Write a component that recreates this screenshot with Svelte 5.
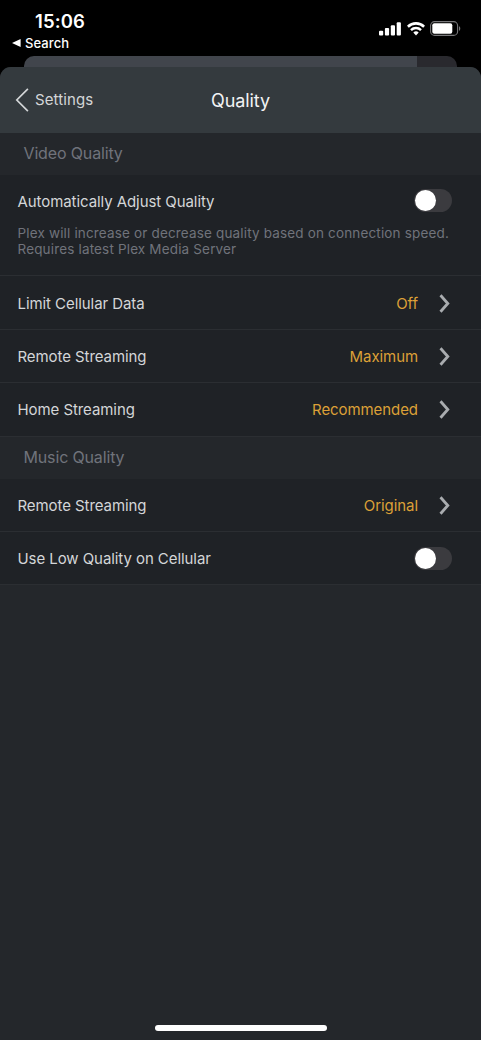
<script lang="ts">
	type Row = {
		label: string;
		kind: 'link' | 'toggle';
		value?: string;
		hint?: string[];
	};
	type Section = { title: string; rows: Row[] };

	let sections = $state<Section[]>([
		{
			title: 'Video Quality',
			rows: [
				{
					label: 'Automatically Adjust Quality',
					kind: 'toggle',
					hint: [
						'Plex will increase or decrease quality based on connection speed.',
						'Requires latest Plex Media Server'
					]
				},
				{ label: 'Limit Cellular Data', kind: 'link', value: 'Off' },
				{ label: 'Remote Streaming', kind: 'link', value: 'Maximum' },
				{ label: 'Home Streaming', kind: 'link', value: 'Recommended' }
			]
		},
		{
			title: 'Music Quality',
			rows: [
				{ label: 'Remote Streaming', kind: 'link', value: 'Original' },
				{ label: 'Use Low Quality on Cellular', kind: 'toggle' }
			]
		}
	]);

	let enabled = $state<Record<string, boolean>>({});
</script>

{#snippet toggle(label: string)}
	<button
		class="switch"
		class:on={enabled[label]}
		role="switch"
		aria-checked={!!enabled[label]}
		aria-label={label}
		onclick={() => (enabled[label] = !enabled[label])}
	>
		<span class="knob"></span>
	</button>
{/snippet}

<div class="screen">
	<div class="status">
		<div class="status-left">
			<div class="time">15:06</div>
			<div class="return">
				<svg width="9" height="8" viewBox="0 0 9 8"><path d="M8.6 0v8L0 4z" fill="#fff" /></svg>
				<span>Search</span>
			</div>
		</div>
		<div class="status-right">
			<svg width="22" height="14" viewBox="0 0 22 14" fill="#fff">
				<rect x="0" y="8.7" width="4.2" height="4.8" rx="1" />
				<rect x="5.9" y="6" width="4.2" height="7.5" rx="1" />
				<rect x="11.8" y="3.2" width="4.2" height="10.3" rx="1" />
				<rect x="17.7" y="0.2" width="4.2" height="13.3" rx="1" />
			</svg>
			<svg class="wifi" width="18" height="14" viewBox="0 0 18 14" fill="none" stroke="#fff">
				<path d="M0.9 4.7a11.6 11.6 0 0 1 16.2 0" stroke-width="2.6" />
				<path d="M4 8.1a7.1 7.1 0 0 1 10 0" stroke-width="2.4" />
				<path d="M6.3 10.6a3.9 3.9 0 0 1 5.4 0L9 13.4z" fill="#fff" stroke="none" />
			</svg>
			<svg class="battery" width="31" height="15" viewBox="0 0 31 15">
				<rect x="0.6" y="0.6" width="27" height="13.8" rx="4" fill="none" stroke="#77777a" stroke-width="1.1" />
				<rect x="2.3" y="2.3" width="20" height="10.4" rx="2" fill="#fff" />
				<path d="M29 5.2v4.6c1.7-.7 1.7-3.9 0-4.6z" fill="#77777a" />
			</svg>
		</div>
	</div>

	<div class="behind"></div>

	<div class="sheet">
		<header>
			<button class="back">
				<svg width="14" height="24" viewBox="0 0 14 24" fill="none" stroke="#d3d6d8" stroke-width="1.7">
					<path d="M12.9 0.8L1.8 12l11.1 11.2" />
				</svg>
				<span>Settings</span>
			</button>
			<h1>Quality</h1>
		</header>

		{#each sections as section}
			<h2>{section.title}</h2>
			{#each section.rows as row}
				<div class="row">
					<div class="line">
						<span class="label">{row.label}</span>
						{#if row.kind === 'toggle'}
							{@render toggle(row.label)}
						{:else}
							<span class="value">{row.value}</span>
							<svg class="chevron" width="11" height="19" viewBox="0 0 11 19" fill="none" stroke="#a9acaf" stroke-width="2.8">
								<path d="M1.5 1.3L8.8 9.5l-7.3 8.2" />
							</svg>
						{/if}
					</div>
					{#if row.hint}
						<p>
							{#each row.hint as text}
								<span>{text}</span>
							{/each}
						</p>
					{/if}
				</div>
			{/each}
		{/each}

		<div class="home"></div>
	</div>
</div>

<style>
	:global(body) {
		background: #000;
	}

	.screen {
		display: flex;
		flex-direction: column;
		width: 481px;
		height: 1040px;
		background: #000;
		color: #d4d6d8;
		font-family: Inter, 'Liberation Sans', sans-serif;
		overflow: hidden;
	}

	button {
		border: none;
		padding: 0;
		background: none;
		color: inherit;
		font: inherit;
	}

	svg {
		display: block;
		flex: none;
	}

	.status {
		display: flex;
		justify-content: space-between;
		height: 56px;
		flex: none;
		color: #fff;
	}

	.status-left {
		padding: 10px 0 0 12px;
	}

	.time {
		padding-left: 23px;
		font-size: 18.5px;
		line-height: 23px;
		font-weight: 600;
		letter-spacing: 0.1px;
	}

	.return {
		display: flex;
		align-items: center;
		gap: 4px;
		margin-top: 2px;
		font-size: 13px;
		line-height: 16px;
		font-weight: 500;
		letter-spacing: 0.1px;
	}

	.status-right {
		display: flex;
		align-items: flex-start;
		padding: 22px 20px 0 0;
	}

	.wifi {
		margin-left: 6px;
	}

	.battery {
		margin: -1px 0 0 5px;
	}

	.behind {
		flex: none;
		height: 11px;
		margin: 0 24px;
		border-radius: 10px 10px 0 0;
		background: linear-gradient(to right, #41454c 393px, #29292e 393px);
	}

	.sheet {
		display: flex;
		flex-direction: column;
		flex: 1;
		border-radius: 11px 11px 0 0;
		background: #24272b;
		overflow: hidden;
	}

	header {
		display: grid;
		grid-template-columns: 1fr auto 1fr;
		align-items: center;
		height: 66px;
		flex: none;
		background: #343a3e;
	}

	.back {
		display: flex;
		align-items: center;
		gap: 6px;
		padding-left: 15px;
		font-size: 15px;
		letter-spacing: 0.1px;
	}

	.back span {
		margin-top: -2px;
	}

	h1 {
		margin: 0;
		font-size: 18px;
		font-weight: 400;
		letter-spacing: -0.1px;
		color: #f2f3f4;
	}

	h2 {
		flex: none;
		height: 42px;
		margin: 0;
		padding-left: 23.5px;
		font-size: 16px;
		font-weight: 400;
		line-height: 41px;
		letter-spacing: -0.15px;
		color: #70737b;
		background: #24272b;
	}

	.row {
		flex: none;
		background: #1f2226;
		border-bottom: 1px solid #2b2e32;
	}

	.line {
		display: flex;
		align-items: center;
		height: 52.4px;
		padding: 0 29px 0 17.5px;
		font-size: 15px;
		letter-spacing: -0.07px;
	}

	/* the hint sits close under its line */
	.line:has(+ p) {
		height: 51px;
	}

	.label {
		flex: 1;
	}

	.label,
	.value {
		padding-top: 1px;
	}

	.value {
		color: #dca037;
	}

	.chevron {
		margin: 1px 2px 0 21px;
	}

	.switch {
		width: 38px;
		height: 23px;
		padding: 1px;
		border-radius: 12px;
		background: #3b3b3f;
	}

	.switch.on {
		background: #dca037;
	}

	.knob {
		display: block;
		width: 21px;
		height: 21px;
		border-radius: 50%;
		background: #fff;
	}

	.switch.on .knob {
		margin-left: auto;
	}

	p {
		margin: -1px 0 0;
		padding: 0 0 18.4px 17.5px;
		font-size: 13.5px;
		line-height: 16px;
		letter-spacing: 0.16px;
		color: #70737b;
	}

	p span {
		display: block;
		white-space: nowrap;
	}

	.home {
		width: 172px;
		height: 6px;
		margin: auto auto 9px;
		border-radius: 3px;
		background: #fff;
	}
</style>
